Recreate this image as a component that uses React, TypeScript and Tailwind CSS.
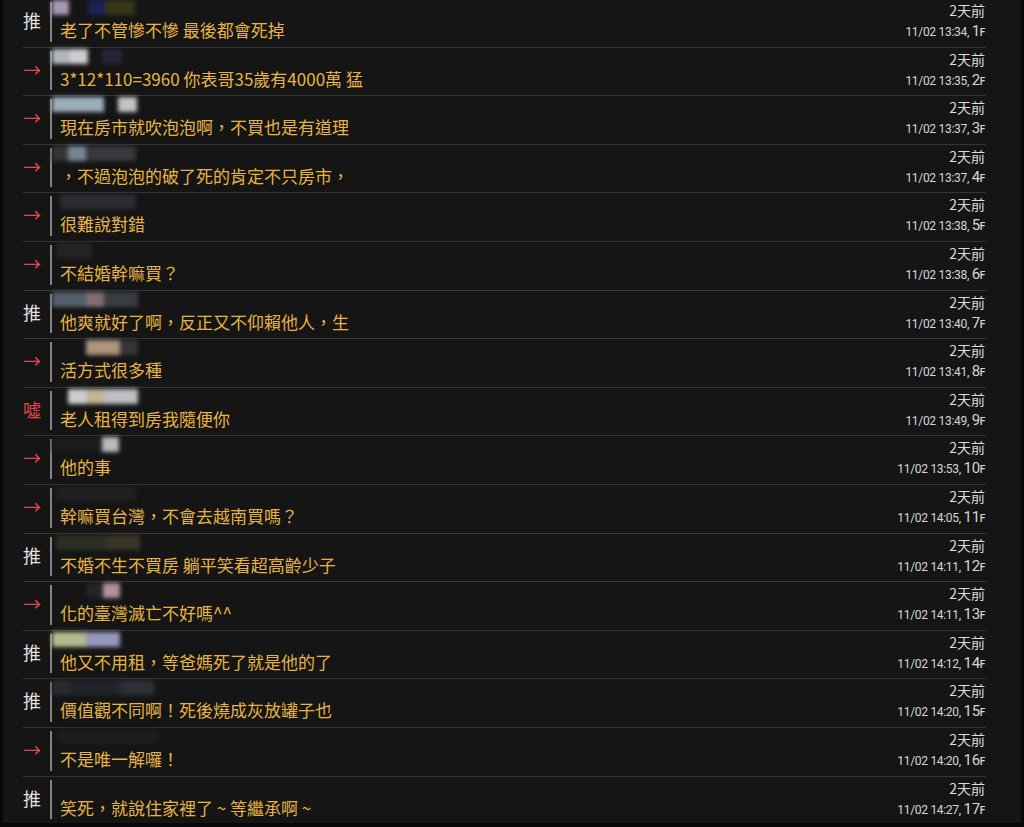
import React from "react";

type Tag = "push" | "arrow" | "boo";
type Blk = [number, number, string];

type Row = {
  tag: Tag;
  text: string;
  time: string;
  floor: number;
  blocks: Blk[];
};

const rows: Row[] = [
  { tag: "push", text: "老了不管慘不慘 最後都會死掉", time: "13:34", floor: 1, blocks: [[0, 17, "#b8a6c6"], [19, 17, "#1e2360"], [0, 30, "#3a3a1a"]] },
  { tag: "arrow", text: "3*12*110=3960 你表哥35歲有4000萬 猛", time: "13:35", floor: 2, blocks: [[0, 18, "#c4c9cf"], [0, 18, "#e2e2e2"], [14, 20, "#26283a"]] },
  { tag: "arrow", text: "現在房市就吹泡泡啊，不買也是有道理", time: "13:37", floor: 3, blocks: [[0, 52, "#a9bfcc"], [14, 19, "#d6d6d6"]] },
  { tag: "arrow", text: "，不過泡泡的破了死的肯定不只房市，", time: "13:37", floor: 4, blocks: [[0, 16, "#3a3a3a"], [0, 18, "#7e93a2"], [0, 50, "#3c3c42"]] },
  { tag: "arrow", text: "很難說對錯", time: "13:38", floor: 5, blocks: [[8, 76, "#2e2e34"]] },
  { tag: "arrow", text: "不結婚幹嘛買？", time: "13:38", floor: 6, blocks: [[4, 36, "#262626"]] },
  { tag: "push", text: "他爽就好了啊，反正又不仰賴他人，生", time: "13:40", floor: 7, blocks: [[0, 34, "#5a6874"], [0, 18, "#8e7780"], [0, 34, "#3e4248"]] },
  { tag: "arrow", text: "活方式很多種", time: "13:41", floor: 8, blocks: [[34, 34, "#bfa28a"], [0, 18, "#3a3a3a"]] },
  { tag: "boo", text: "老人租得到房我隨便你", time: "13:49", floor: 9, blocks: [[16, 18, "#dfe3e7"], [0, 18, "#d6c7a3"], [0, 34, "#cfd3d7"]] },
  { tag: "arrow", text: "他的事", time: "13:53", floor: 10, blocks: [[0, 50, "#1c1c1c"], [0, 17, "#c9cdd1"]] },
  { tag: "arrow", text: "幹嘛買台灣，不會去越南買嗎？", time: "14:05", floor: 11, blocks: [[4, 80, "#222222"]] },
  { tag: "push", text: "不婚不生不買房 躺平笑看超高齡少子", time: "14:11", floor: 12, blocks: [[4, 50, "#2c3424"], [0, 34, "#3e3a2a"]] },
  { tag: "arrow", text: "化的臺灣滅亡不好嗎^^", time: "14:11", floor: 13, blocks: [[34, 17, "#262626"], [0, 17, "#c69fb0"]] },
  { tag: "push", text: "他又不用租，等爸媽死了就是他的了", time: "14:12", floor: 14, blocks: [[0, 34, "#c6cc9e"], [0, 34, "#a2a6cc"]] },
  { tag: "push", text: "價值觀不同啊！死後燒成灰放罐子也", time: "14:20", floor: 15, blocks: [[0, 18, "#2a2e34"], [0, 50, "#22262c"], [0, 34, "#30343a"]] },
  { tag: "arrow", text: "不是唯一解囉！", time: "14:20", floor: 16, blocks: [[6, 100, "#1d1d1d"]] },
  { tag: "push", text: "笑死，就說住家裡了 ~ 等繼承啊 ~", time: "14:27", floor: 17, blocks: [] },
];

const cjk = "font-['Noto_Sans_CJK_TC','Noto_Sans',sans-serif]";

function TagMark({ tag }: { tag: Tag }) {
  if (tag === "push")
    return <span className="text-[#e2e2e2]">推</span>;
  if (tag === "boo")
    return <span className="text-[#e0484c]">噓</span>;
  return <span className="text-[#dc4b55]">→</span>;
}

function CommentRow({ row }: { row: Row }) {
  return (
    <div className="flex h-[48.6px] shrink-0 border-b border-[#353535]">
      <div className={`w-[27px] shrink-0 pt-[10px] text-[18px] leading-[22px] ${cjk}`}>
        <TagMark tag={row.tag} />
      </div>
      <div className="mt-[3px] mb-[5px] w-[2px] shrink-0 bg-[#858585]" />
      <div className="flex min-w-0 flex-1 flex-col pl-[8px]">
        <div className="-ml-[8px] flex h-[18px] items-start overflow-hidden pt-[1px] opacity-90 blur-[2px]">
          {row.blocks.map((b, i) => (
            <div
              key={i}
              className="h-[15px] shrink-0"
              style={{ marginLeft: b[0], width: b[1], backgroundColor: b[2] }}
            />
          ))}
        </div>
        <div className={`pt-[3px] text-[17px] leading-[20px] whitespace-nowrap text-[#e6b445] ${cjk}`}>
          {row.text}
        </div>
      </div>
      <div className="flex shrink-0 flex-col items-end pt-[2px] pr-[1px]">
        <div className={`text-[14px] leading-[18px] text-[#dddddd] ${cjk}`}>2天前</div>
        <div className="mt-[4px] flex items-baseline font-['Roboto',sans-serif] text-[12px] leading-[16px] tracking-[-0.3px] text-[#d6d6d6]">
          <span>11/02 {row.time},&nbsp;</span>
          <span className="text-[15px]">{row.floor}</span>
          <span className="text-[10px] font-medium">F</span>
        </div>
      </div>
    </div>
  );
}

export default function App() {
  return (
    <div className="h-[827px] w-[1024px] overflow-hidden border-l-[3px] border-r-[3px] border-b-[4px] border-[#070707] bg-[#151515]">
      <div className="-mt-[1px] ml-[20px] mr-[35px] flex flex-col">
        {rows.map((r) => (
          <CommentRow key={r.floor} row={r} />
        ))}
      </div>
    </div>
  );
}
